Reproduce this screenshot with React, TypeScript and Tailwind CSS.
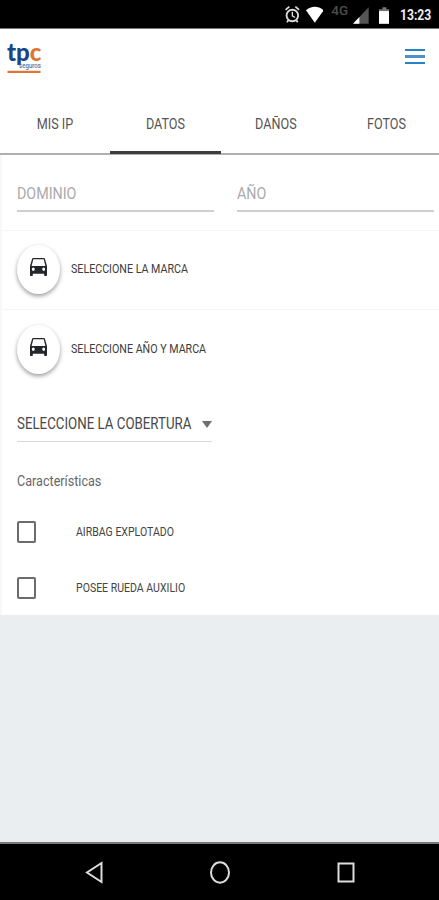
import { useState } from "react";

const tabs = [
  { id: "ip", label: "MIS IP" },
  { id: "datos", label: "DATOS" },
  { id: "danos", label: "DAÑOS" },
  { id: "fotos", label: "FOTOS" },
];

const CarIcon = () => (
  <svg viewBox="3 5 18 16" preserveAspectRatio="none" className="w-[17px] h-[18px] fill-[#24262b]">
    <path d="M18.92 6.01C18.72 5.42 18.16 5 17.5 5h-11c-.66 0-1.21.42-1.42 1.01L3 12v8c0 .55.45 1 1 1h1c.55 0 1-.45 1-1v-1h12v1c0 .55.45 1 1 1h1c.55 0 1-.45 1-1v-8l-2.08-5.99zM6.5 16.5c-.83 0-1.5-.67-1.5-1.5S5.67 13.5 6.5 13.5s1.5.67 1.5 1.5S7.33 16.5 6.5 16.5zm11 0c-.83 0-1.5-.67-1.5-1.5s.67-1.5 1.5-1.5 1.5.67 1.5 1.5-.67 1.5-1.5 1.5zM4.7 12L6.5 6.2h11L19.3 12H4.7z" />
  </svg>
);

const Logo = () => (
  <svg width="38" height="34" viewBox="0 0 38 34" className="overflow-visible">
    <text x="1" y="20" fontFamily="Lato, sans-serif" fontWeight="900" fontSize="24.5" textLength="34.5" lengthAdjust="spacingAndGlyphs" fill="#1b4586">
      tp<tspan fill="#dd7430">c</tspan>
    </text>
    <text x="13" y="26.5" fontFamily="Roboto, sans-serif" fontWeight="500" fontSize="7" textLength="22" lengthAdjust="spacingAndGlyphs" fill="#55719f">
      seguros
    </text>
    <path d="M1.5 30.9h33" stroke="#d9773a" strokeWidth="2.4" />
  </svg>
);

const StatusBar = () => (
  <div className="flex items-center h-[29px] bg-black border-b border-[#777] pl-[285px]">
    {/* Alarm */}
    <svg width="15" height="19" viewBox="0 0 15 19" fill="none" stroke="#dcdcdc">
      <circle cx="7.5" cy="10.5" r="5.9" strokeWidth="1.9" />
      <path d="M7.5 6.8v4l2.8 1.8" strokeWidth="1.4" />
      <path d="M.6 4.8L4.4 1.4M14.4 4.8L10.6 1.4M3.4 15.5L2 17.5M11.6 15.5l1.4 2" strokeWidth="1.8" />
    </svg>
    {/* Wifi */}
    <svg width="18" height="17" viewBox="0 0 18 17" className="ml-[6px]">
      <path d="M0 4.2C5 -.6 13 -.6 18 4.2L9 17z" fill="#fff" />
    </svg>
    <span className="w-[20px] ml-[8px] mb-[7px] text-[13.5px] leading-none font-medium text-[#4c4c4c]">4G</span>
    {/* Signal */}
    <svg width="16" height="17" viewBox="0 0 16 17" className="ml-[2px] mt-[3px]">
      <path d="M16 0v17H0z" fill="#555" />
      <path d="M6.5 10v7H0z" fill="#fff" />
    </svg>
    {/* Battery */}
    <svg width="11" height="17" viewBox="0 0 11 17" className="ml-[10px] mt-[2px]">
      <path d="M3.5 0h4v2H11v3H0V2h3.5z" fill="#777" />
      <path d="M0 4h11v13H0z" fill="#fff" />
    </svg>
    <span className="ml-[11px] mt-[3px] text-[15px] leading-none font-bold text-[#eee] whitespace-nowrap origin-left scale-x-[0.81]">
      13:23
    </span>
  </div>
);

export default function App() {
  const [activeTab, setActiveTab] = useState<string>("datos");
  const [isAirbag, setIsAirbag] = useState<boolean>(false);
  const [isRueda, setIsRueda] = useState<boolean>(false);

  return (
    <div className="flex flex-col w-[439px] h-[900px] overflow-hidden bg-[#eaeef1] font-['Roboto',sans-serif]">
      <StatusBar />

      {/* Header */}
      <div className="flex items-start justify-between h-[65px] bg-white pl-[6px] pr-[14px]">
        <div className="mt-[12px]">
          <Logo />
        </div>
        <button type="button" className="flex flex-col gap-[4px] mt-[20px]">
          <span className="block w-5 h-[2.3px] bg-[#2882c4]" />
          <span className="block w-5 h-[2.3px] bg-[#4f8fd0]" />
          <span className="block w-5 h-[2.3px] bg-[#2882c4]" />
        </button>
      </div>

      {/* Tabs */}
      <div className="flex h-[61px] bg-white border-b-2 border-[#b0b0b0]">
        {tabs.map((tab) => (
          <button
            key={tab.id}
            type="button"
            onClick={() => setActiveTab(tab.id)}
            className={`w-[110.3px] shrink-0 -mb-px flex items-center justify-center pt-[5px] border-b-3 text-[14.5px] text-[#555] ${
              activeTab === tab.id ? "border-[#3c3c3c]" : "border-transparent"
            }`}
          >
            <span className="scale-x-[0.87]">{tab.label}</span>
          </button>
        ))}
      </div>

      {/* Form */}
      <div className="flex flex-col h-[460px] bg-white border-l-2 border-[#f8f8f8]">
        <div className="flex h-[76px] pl-[15px] pr-[5px] gap-[23px] border-b border-[#f5f5f5]">
          <div className="flex items-end w-[197px] h-[57px] pb-[4px] border-b-2 border-[#cfcfcf] text-[17px] text-[#aaa]">
            <span className="origin-left scale-x-[0.84]">DOMINIO</span>
          </div>
          <div className="flex items-end flex-1 h-[57px] pb-[4px] border-b-2 border-[#cfcfcf] text-[17px] text-[#aaa]">
            <span className="origin-left scale-x-[0.84]">AÑO</span>
          </div>
        </div>

        <div className="flex items-center h-[79px] pl-[15px] border-b border-[#f5f5f5]">
          <div className="flex items-center justify-center w-[43px] h-[49px] mb-[2px] pb-[5px] rounded-[50%] bg-white shadow-[0_2px_4px_rgba(0,0,0,0.4)]">
            <CarIcon />
          </div>
          <span className="ml-[11px] mb-[3px] text-[13.5px] text-[#3c3c3c] whitespace-nowrap origin-left scale-x-[0.79]">
            SELECCIONE LA MARCA
          </span>
        </div>
        <div className="flex items-center h-[79px] pl-[15px]">
          <div className="flex items-center justify-center w-[43px] h-[49px] pb-[5px] rounded-[50%] bg-white shadow-[0_2px_4px_rgba(0,0,0,0.4)]">
            <CarIcon />
          </div>
          <span className="ml-[11px] mb-[2px] text-[13.5px] text-[#3c3c3c] whitespace-nowrap origin-left scale-x-[0.79]">
            SELECCIONE AÑO Y MARCA
          </span>
        </div>

        <div className="flex items-center justify-between w-[195px] h-[36px] mt-[17px] pt-[2px] ml-[15px] border-b border-[#d8d8d8]">
          <span className="w-[174px] text-[16.5px] text-[#484848] whitespace-nowrap origin-left scale-x-[0.805]">
            SELECCIONE LA COBERTURA
          </span>
          <svg width="10" height="7" viewBox="0 0 10 7">
            <path d="M0 0h10L5 7z" fill="#6f6f6f" />
          </svg>
        </div>

        <div className="h-[61px] pt-[29px] pl-[15px] text-[14px] leading-5 text-[#666]">
          <span className="inline-block origin-left scale-x-[0.9]">Características</span>
        </div>

        <label className="flex items-center h-[56px] pl-[15px]">
          <input
            type="checkbox"
            checked={isAirbag}
            onChange={() => setIsAirbag(!isAirbag)}
            className="appearance-none w-[19px] h-[22px] mt-px border-2 border-[#6b6b6b] rounded-[2px] checked:bg-[#6b6b6b]"
          />
          <span className="ml-[40px] text-[13.5px] text-[#444] whitespace-nowrap origin-left scale-x-[0.78]">
            AIRBAG EXPLOTADO
          </span>
        </label>
        <label className="flex items-center h-[56px] pl-[15px]">
          <input
            type="checkbox"
            checked={isRueda}
            onChange={() => setIsRueda(!isRueda)}
            className="appearance-none w-[19px] h-[22px] mt-px border-2 border-[#6b6b6b] rounded-[2px] checked:bg-[#6b6b6b]"
          />
          <span className="ml-[40px] text-[13.5px] text-[#444] whitespace-nowrap origin-left scale-x-[0.78]">
            POSEE RUEDA AUXILIO
          </span>
        </label>
      </div>

      {/* Android navigation bar */}
      <div className="flex items-center h-[58px] mt-auto bg-black border-t-2 border-[#777] pl-[85px]">
        <svg width="18" height="23" viewBox="0 0 18 23" fill="none" stroke="#ddd" strokeWidth="2">
          <path d="M16.5 2v19L2 11.5z" />
        </svg>
        <svg width="21" height="23" viewBox="0 0 21 23" fill="none" stroke="#ddd" strokeWidth="2" className="ml-[106px]">
          <ellipse cx="11" cy="11.5" rx="9" ry="10.2" />
        </svg>
        <svg width="18" height="21" viewBox="0 0 18 21" fill="none" stroke="#ddd" strokeWidth="2" className="ml-[107px]">
          <path d="M1.5 1.5h15v18h-15z" />
        </svg>
      </div>
    </div>
  );
}
